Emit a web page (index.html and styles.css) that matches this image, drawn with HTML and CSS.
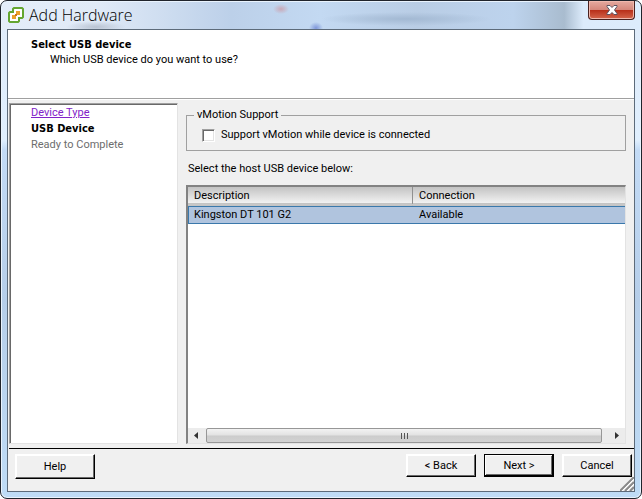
FILE: index.html
```
<!DOCTYPE html>
<html lang="en">
<head>
  <meta charset="UTF-8">
  <meta name="viewport" content="width=device-width, initial-scale=1.0">
  <title>Add Hardware</title>
  <link rel="stylesheet" href="styles.css">
</head>
<body>
  <div class="window">
    <div class="titlebar">
      <svg class="logo" width="16" height="16" viewBox="0 0 16 16">
        <path d="M6 1h8l1 1v8l-1 1h-3v3l-1 1H2l-1-1V6l1-1h3V2z" fill="#fff" stroke="#64a630" stroke-width="2"/>
        <path d="M8 4h4v4H9v1H8v3H4V8h3V7h1z" fill="#eca12c"/>
        <path d="M7 7h2v2H7z" fill="#c9731a"/>
      </svg>
      <h1>Add Hardware</h1>
      <button class="close" aria-label="Close">
        <svg width="12" height="10" viewBox="0 0 12 10">
          <path d="M1 .5h3l2 2 2-2h3v1L8.500 5 11 8.500v1H8l-2-2-2 2H1v-1L3.500 5 1 1.500z" fill="#fff" stroke="#5b5360"/>
        </svg>
      </button>
    </div>

    <div class="client">
      <div class="header">
        <h2>Select USB device</h2>
        <p>Which USB device do you want to use?</p>
      </div>

      <div class="content">
        <ul class="steps">
          <li><a href="#">Device Type</a></li>
          <li class="current">USB Device</li>
          <li class="pending">Ready to Complete</li>
        </ul>

        <div class="main">
          <fieldset>
            <legend>vMotion Support</legend>
            <input type="checkbox" id="vmotion">
            <label for="vmotion">Support vMotion while device is connected</label>
          </fieldset>

          <p class="hint">Select the host USB device below:</p>

          <div class="list">
            <table>
              <thead>
                <tr><th class="desc">Description</th><th>Connection</th></tr>
              </thead>
              <tbody>
                <tr><td>Kingston DT 101 G2</td><td>Available</td></tr>
              </tbody>
            </table>
            <div class="scrollbar">
              <svg width="18" height="15" viewBox="0 0 18 15"><path d="M10 4v7L6 7.500z" fill="#333"/></svg>
              <div class="thumb"><i></i><i></i><i></i></div>
              <svg width="23" height="15" viewBox="0 0 23 15"><path d="M13 4v7l4-3.500z" fill="#333"/></svg>
            </div>
          </div>
        </div>
      </div>

      <div class="footer">
        <button class="btn help">Help</button>
        <button class="btn">&lt; Back</button>
        <button class="btn default">Next &gt;</button>
        <button class="btn cancel">Cancel</button>
        <svg class="grip" width="14" height="14" viewBox="0 0 14 14">
          <path d="M0 14 14 0M5 14l9-9M10 14l4-4" stroke="#8a8a8a" stroke-width="2"/>
          <path d="M2 14 14 2M7 14l7-7" stroke="#fff"/>
        </svg>
      </div>
    </div>
  </div>
</body>
</html>
```

FILE: styles.css
```
* {
  box-sizing: border-box;
}
body {
  margin: 0;
  background: #fff;
  font-family: Roboto, Tahoma, sans-serif;
  font-size: 11px;
  line-height: 16px;
  color: #000;
}
h1, h2, p, ul {
  margin: 0;
  padding: 0;
}
.window {
  display: flex;
  flex-direction: column;
  height: 100vh;
  padding: 0 6px 6px;
  border: 1px solid #20242c;
  border-radius: 7px;
  background:
    radial-gradient(8px 5px at 280px 8px, #c9a9b8, transparent) no-repeat,
    radial-gradient(7px 6px at 315px 27px, #7f97da, transparent) top / 100% 28px no-repeat,
    radial-gradient(85px 7px at 405px 18px, #a3b9d3, transparent) no-repeat,
    radial-gradient(30px 6px at 95px 26px, #b9c3d2, transparent) top / 100% 28px no-repeat,
    linear-gradient(90deg, #e4edf9 0%, #e0eaf7 15%, #bcd0e9 36%, #c3d9f2 50%, #b9cde5 65%, #bdd3ed 80%, #a9bccf 88%, #dcebfb 91%, #dcecfc 100%) top / 100% 29px no-repeat,
    linear-gradient(#dfebf9 0%, #e0effe 28%, #c3dbf6 30%, #b6cee9 60%, #bfdcf6 100%);
  box-shadow: inset 0 0 0 1px #e9f3fd;
}

/* title bar */
.titlebar {
  display: flex;
  align-items: center;
  height: 28px;
  flex: none;
}
.logo {
  margin-left: 1px;
}
h1 {
  flex: 1;
  margin-left: 5px;
  font: 300 16px/26px "Open Sans", "Segoe UI", sans-serif;
}
.close {
  display: flex;
  align-items: center;
  justify-content: center;
  align-self: flex-start;
  width: 47px;
  height: 19px;
  padding: 0;
  border: 1px solid #49211f;
  border-top: 0;
  border-radius: 0 0 4px 4px;
  background: linear-gradient(#e5aaa0 0%, #d5877b 48%, #b8301a 52%, #d5664c 100%);
  box-shadow: inset 0 0 0 1px #efb8ad;
}

/* client area */
.client {
  display: flex;
  flex-direction: column;
  flex: 1;
  min-height: 0;
  border: 1px solid #5d6b7a;
  background: #f0f0f0;
}
.header {
  height: 69px;
  padding: 7px 23px;
  border-bottom: 1px solid #a0a0a0;
  background: #fff;
}
h2, .current {
  font-family: "DejaVu Sans Condensed", Tahoma, sans-serif;
  font-size: 11px;
  font-weight: bold;
}
h2 {
  line-height: 16px;
}
.header p {
  margin-left: 19px;
  line-height: 14px;
}
.content {
  display: flex;
  flex: 1;
  gap: 8px;
  min-height: 0;
  padding: 3px 8px 4px 1px;
  border-top: 1px solid #fff;
}
.steps {
  width: 169px;
  padding: 1px 21px;
  border: 1px solid #e3e3e3;
  border-top-color: #a0a0a0;
  border-left-color: #a0a0a0;
  background: #fff;
  box-shadow: inset 1px 1px #696969;
  list-style: none;
}
.steps a {
  color: #8223c8;
}
.pending {
  color: #6d6d6d;
}

/* right side */
.main {
  display: flex;
  flex-direction: column;
  flex: 1;
  min-width: 0;
  padding-top: 4px;
}
fieldset {
  display: flex;
  align-items: center;
  gap: 6px;
  height: 44px;
  margin: 0;
  padding: 4px 15px 0;
  border: 1px solid #a0a0a0;
}
legend {
  margin-left: -8px;
  padding: 0 3px;
}
input[type="checkbox"] {
  appearance: none;
  width: 13px;
  height: 13px;
  margin: 0;
  border: 1px solid #fff;
  border-top-color: #a0a0a0;
  border-left-color: #a0a0a0;
  background: #fff;
  box-shadow: inset 1px 1px #696969, inset -1px -1px #e3e3e3;
}
.hint {
  margin: 10px 2px 8px;
}
.list {
  display: flex;
  flex-direction: column;
  flex: 1;
  border: 1px solid #e3e3e3;
  border-top: 2px solid #828282;
  border-left: 2px solid #828282;
  background: #fff;
}
table {
  width: 100%;
  border-collapse: separate;
  border-spacing: 0;
  table-layout: fixed;
}
th, td {
  padding: 0 6px;
  font-weight: normal;
  text-align: left;
}
th {
  height: 19px;
  padding-top: 1px;
  border-bottom: 3px double #c4c4c4;
  background: linear-gradient(#c3c3c3, #f2f2f2);
  line-height: 14px;
}
.desc {
  width: 225px;
  border-right: 1px solid #909090;
}
td {
  height: 18px;
  border-top: 1px solid #3a78ab;
  border-bottom: 1px solid #3a78ab;
  background: #b0c4de;
  line-height: 16px;
}
td:first-child {
  border-left: 1px solid #3a78ab;
  padding-left: 5px;
}
.scrollbar {
  display: flex;
  height: 15px;
  margin-top: auto;
  background: #ececec;
}
.thumb {
  display: flex;
  align-items: center;
  justify-content: center;
  gap: 2px;
  flex: 1;
  border: 1px solid #979797;
  border-radius: 2px;
  background: linear-gradient(#f3f3f3, #e2e2e2 48%, #cccccc 52%, #d2d2d2);
}
.thumb i {
  width: 1px;
  height: 6px;
  background: #555;
}

/* buttons */
.footer {
  position: relative;
  display: flex;
  align-items: flex-start;
  height: 43px;
  margin-left: 1px;
  padding: 5px 0 0 6px;
  border-top: 1px solid #000;
}
.btn {
  width: 70px;
  height: 23px;
  margin-right: 8px;
  padding: 1px 0 0;
  border: 1px solid #fff;
  border-right-color: #000;
  border-bottom-color: #000;
  background: #f0f0f0;
  box-shadow: inset -1px -1px #696969, inset 1px 1px #fff;
  font: inherit;
  color: #000;
}
.help {
  width: 80px;
  height: 25px;
  margin-right: auto;
}
.default {
  border-color: #000;
  box-shadow: inset -1px -1px #000, inset 1px 1px #fff, inset -2px -2px #696969;
}
.cancel {
  margin-right: 2px;
}
.grip {
  position: absolute;
  right: 0;
  bottom: 0;
}
```
